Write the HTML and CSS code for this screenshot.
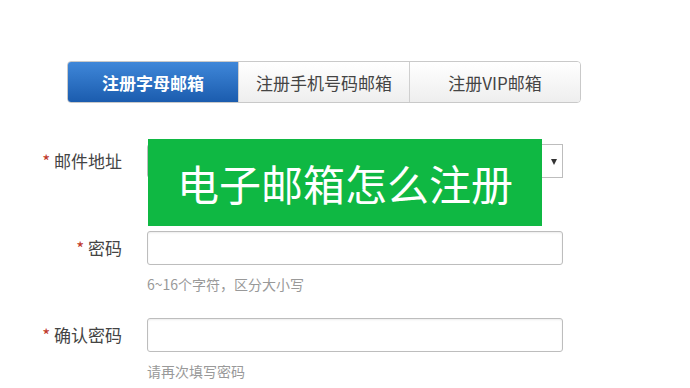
FILE: index.html
```html
<!DOCTYPE html>
<html lang="zh-CN">
<head>
    <meta charset="UTF-8">
    <title>电子邮箱怎么注册</title>
    <link rel="stylesheet" href="styles.css">
</head>
<body>

<div class="page">
    <div class="tabs">
        <div class="tab active">注册字母邮箱</div>
        <div class="tab">注册手机号码邮箱</div>
        <div class="tab">注册VIP邮箱</div>
    </div>

    <div class="form">
        <div class="row">
            <label class="label"><span class="star">*</span> 邮件地址</label>
            <div class="field">
                <div class="mail-box">
                    <input type="text" class="input mail-input">
                    <div class="mail-select"><span class="arrow"></span></div>
                </div>
            </div>
        </div>
        <div class="row">
            <label class="label"><span class="star">*</span> 密码</label>
            <div class="field">
                <input type="password" class="input">
                <div class="hint">6~16个字符，区分大小写</div>
            </div>
        </div>
        <div class="row">
            <label class="label"><span class="star">*</span> 确认密码</label>
            <div class="field">
                <input type="password" class="input">
                <div class="hint">请再次填写密码</div>
            </div>
        </div>

        <div class="banner">电子邮箱怎么注册</div>
    </div>
</div>

</body>
</html>
```

FILE: styles.css
```css
body {
    margin: 0;
    background: #fff;
    font-family: "Noto Sans CJK SC", "Liberation Sans", sans-serif;
    color: #333;
}
.page {
    width: 690px;
    height: 388px;
    overflow: hidden;
}
.tabs {
    display: flex;
    margin: 61px 0 0 67px;
    width: 514px;
    height: 42px;
    box-sizing: border-box;
    border: 1px solid #c9c9c9;
    border-radius: 4px;
    overflow: hidden;
}
.tab {
    flex: 1;
    display: flex;
    align-items: center;
    justify-content: center;
    font-size: 17px;
    color: #444;
    background: linear-gradient(#ffffff, #eeeeee);
    border-left: 1px solid #cfcfcf;
}
.tab:first-child {
    border-left: none;
}
.tab.active {
    color: #fff;
    font-weight: bold;
    background: linear-gradient(#3f87d9, #1b5cae);
}
.form {
    position: relative;
    margin-top: 41px;
}
.row {
    display: flex;
    height: 87px;
}
.label {
    width: 122px;
    text-align: right;
    font-size: 17px;
    line-height: 34px;
    color: #444;
}
.star {
    color: #c0392b;
}
.field {
    margin-left: 25px;
    width: 416px;
}
.input {
    display: block;
    width: 416px;
    height: 34px;
    box-sizing: border-box;
    border: 1px solid #bdbdbd;
    border-radius: 3px;
    box-shadow: inset 0 1px 2px rgba(0, 0, 0, 0.08);
    margin: 0;
}
.mail-box {
    display: flex;
    height: 34px;
}
.mail-input {
    width: 300px;
    flex: none;
    border-radius: 3px 0 0 3px;
}
.mail-select {
    flex: 1;
    box-sizing: border-box;
    border: 1px solid #bdbdbd;
    border-left: none;
    position: relative;
}
.arrow {
    position: absolute;
    right: 5px;
    top: 14px;
    border-left: 3px solid transparent;
    border-right: 3px solid transparent;
    border-top: 6px solid #333;
}
.hint {
    margin-top: 9px;
    font-size: 14px;
    color: #999;
    line-height: 20px;
}
.banner {
    position: absolute;
    left: 148px;
    top: -5px;
    width: 394px;
    height: 87px;
    background: #0fb843;
    color: #fff;
    font-size: 42px;
    line-height: 87px;
    text-align: center;
}
```
